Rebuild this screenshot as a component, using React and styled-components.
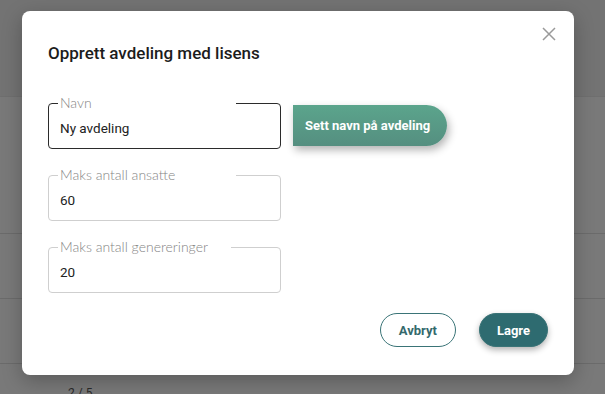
import React from 'react';
import styled, { createGlobalStyle } from 'styled-components';

const GlobalStyle = createGlobalStyle`
  html, body {
    margin: 0;
    padding: 0;
    background: #787878;
    font-family: Roboto, "Liberation Sans", sans-serif;
  }
`;

const Backdrop = styled.div`
  position: relative;
  width: 605px;
  height: 394px;
  overflow: hidden;
  background: #797979;
`;

const BgHeader = styled.div`
  height: 96px;
  background: #737373;
  border-bottom: 1px solid #6f6f6f;
`;

const BgRow = styled.div`
  height: ${p => p.h}px;
  border-bottom: 1px solid #6b6b6b;
`;

const BgPager = styled.div`
  padding: 22px 0 0 68px;
  font-size: 12px;
  color: #2a2a2a;
`;

const Modal = styled.div`
  position: absolute;
  left: 22px;
  top: 11px;
  width: 552px;
  height: 364px;
  box-sizing: border-box;
  background: #fff;
  border-radius: 8px;
  box-shadow: 0 6px 20px rgba(0, 0, 0, 0.25);
  padding: 32px 26px 0 26px;
  display: flex;
  flex-direction: column;
`;

const Close = styled.button`
  position: absolute;
  top: 12px;
  right: 14px;
  width: 22px;
  height: 22px;
  padding: 0;
  border: none;
  background: none;
  color: #9a9a9a;
  cursor: pointer;
`;

const Title = styled.h2`
  margin: 0;
  font-size: 17px;
  font-weight: 500;
  color: #1c1c1c;
  line-height: 20px;
`;

const Form = styled.div`
  margin-top: 40px;
  display: flex;
  flex-direction: column;
  gap: 26px;
`;

const Row = styled.div`
  display: flex;
  align-items: center;
  gap: 12px;
`;

const Field = styled.fieldset`
  margin: 0;
  width: 233px;
  height: 54px;
  box-sizing: border-box;
  padding: 0 11px 0 11px;
  border: 1px solid ${p => (p.active ? '#2b2b2b' : '#cfcfcf')};
  border-radius: 4px;
  margin-top: -8px;
`;

const Legend = styled.legend`
  width: ${p => p.w}px;
  box-sizing: border-box;
  padding: 0 2px;
  margin-left: -2px;
  font-family: Lato, "Noto Sans", sans-serif;
  font-weight: 300;
  font-size: 14px;
  line-height: 16px;
  color: #858585;
`;

const Value = styled.div`
  padding-top: 8px;
  font-size: 13.5px;
  color: #222;
  line-height: 18px;
`;

const NameButton = styled.button`
  height: 41px;
  padding: 0 17px 0 12px;
  border: none;
  border-radius: 0 22px 22px 0;
  background: linear-gradient(180deg, #5ba48c 0%, #558f80 100%);
  color: #fff;
  font-family: Roboto, "Liberation Sans", sans-serif;
  font-weight: 700;
  font-size: 13px;
  box-shadow: 2px 4px 8px rgba(0, 0, 0, 0.3);
  margin-top: -2px;
  cursor: pointer;
`;

const Actions = styled.div`
  margin-top: 20px;
  display: flex;
  justify-content: flex-end;
  gap: 23px;
`;

const Pill = styled.button`
  height: 34px;
  padding: 0 ${p => (p.primary ? 17 : 18)}px;
  border-radius: 17px;
  box-sizing: border-box;
  font-family: Roboto, "Liberation Sans", sans-serif;
  font-weight: 700;
  font-size: 13px;
  cursor: pointer;
  border: 1px solid #3a7477;
  background: ${p => (p.primary ? '#2e6b70' : '#fff')};
  color: ${p => (p.primary ? '#fff' : '#34696c')};
  box-shadow: ${p => (p.primary ? '0 3px 6px rgba(0,0,0,0.3)' : 'none')};
`;

const TextField = ({ label, value, active, notch }) => (
  <Field active={active}>
    <Legend w={notch}>{label}</Legend>
    <Value>{value}</Value>
  </Field>
);

export default function App() {
  return (
    <>
      <GlobalStyle />
      <Backdrop>
        <BgHeader />
        <BgRow h={136} />
        <BgRow h={64} />
        <BgRow h={64} />
        <BgPager>2 / 5</BgPager>
        <Modal>
          <Close aria-label="Lukk">
            <svg width="22" height="22" viewBox="0 0 22 22" fill="none" stroke="currentColor" strokeWidth="1.5">
              <path d="M5 5 L17 17 M17 5 L5 17" />
            </svg>
          </Close>
          <Title>Opprett avdeling med lisens</Title>
          <Form>
            <Row>
              <TextField label="Navn" value="Ny avdeling" active notch={178} />
              <NameButton>Sett navn på avdeling</NameButton>
            </Row>
            <Row>
              <TextField label="Maks antall ansatte" value="60" notch={178} />
            </Row>
            <Row>
              <TextField label="Maks antall genereringer" value="20" notch={173} />
            </Row>
          </Form>
          <Actions>
            <Pill>Avbryt</Pill>
            <Pill primary>Lagre</Pill>
          </Actions>
        </Modal>
      </Backdrop>
    </>
  );
}
